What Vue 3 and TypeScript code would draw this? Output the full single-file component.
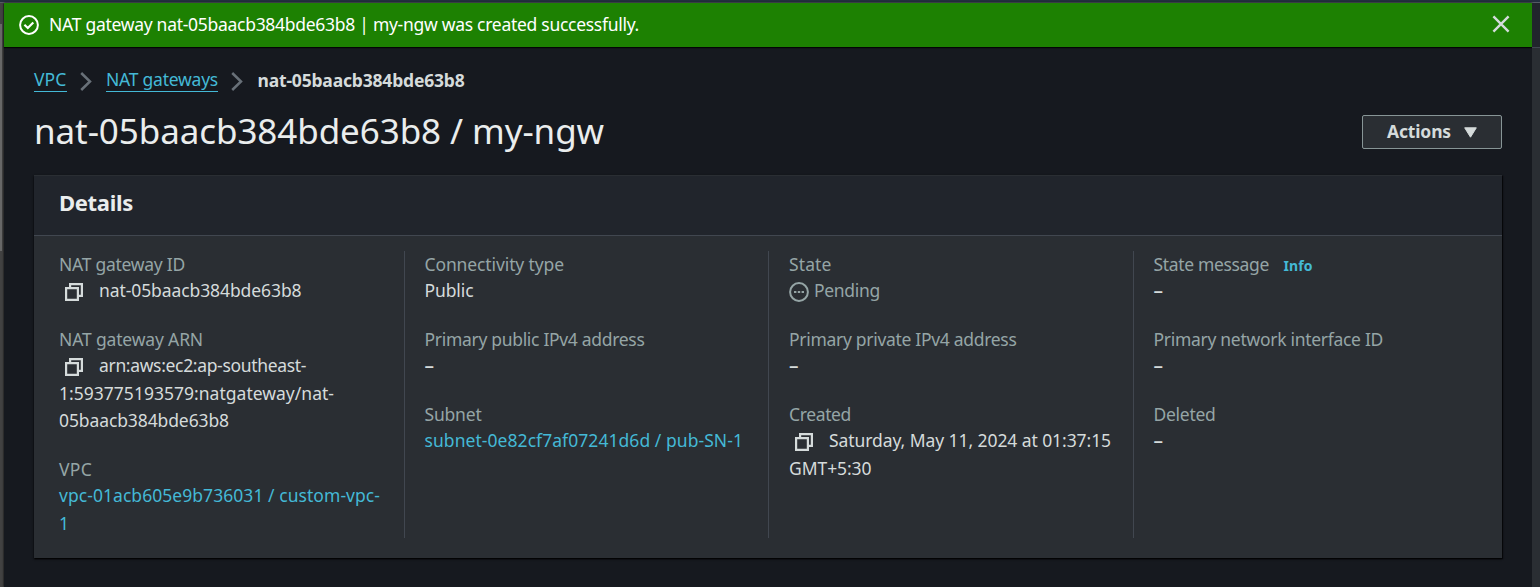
<script setup lang="ts">
import type { Directive } from 'vue'

interface Line {
  text: string
  width: number
}
interface Field {
  label: Line
  lines: Line[]
  kind?: 'copy' | 'link' | 'pending'
  info?: boolean
}

/* Tracks a line of text so that it takes the given width in pixels. */
const vFit: Directive<HTMLElement, number> = {
  mounted(el, { value }) {
    const count = (el.textContent ?? '').length
    const natural = el.getBoundingClientRect().width
    el.style.letterSpacing = `${(value - natural) / count}px`
  },
}

const none: Line[] = [{ text: '–', width: 10 }]

const columns: Field[][] = [
  [
    { label: { text: 'NAT gateway ID', width: 126 }, kind: 'copy', lines: [{ text: 'nat-05baacb384bde63b8', width: 202.5 }] },
    {
      label: { text: 'NAT gateway ARN', width: 144 },
      kind: 'copy',
      lines: [
        { text: 'arn:aws:ec2:ap-southeast-', width: 207 },
        { text: '1:593775193579:natgateway/nat-', width: 275 },
        { text: '05baacb384bde63b8', width: 170 },
      ],
    },
    {
      label: { text: 'VPC', width: 33 },
      kind: 'link',
      lines: [
        { text: 'vpc-01acb605e9b736031 / custom-vpc-', width: 321 },
        { text: '1', width: 10 },
      ],
    },
  ],
  [
    { label: { text: 'Connectivity type', width: 139.5 }, lines: [{ text: 'Public', width: 49 }] },
    { label: { text: 'Primary public IPv4 address', width: 220 }, lines: none },
    { label: { text: 'Subnet', width: 57 }, kind: 'link', lines: [{ text: 'subnet-0e82cf7af07241d6d / pub-SN-1', width: 318.5 }] },
  ],
  [
    { label: { text: 'State', width: 42.5 }, kind: 'pending', lines: [{ text: 'Pending', width: 66 }] },
    { label: { text: 'Primary private IPv4 address', width: 227.5 }, lines: none },
    {
      label: { text: 'Created', width: 62 },
      kind: 'copy',
      lines: [
        { text: 'Saturday, May 11, 2024 at 01:37:15', width: 282 },
        { text: 'GMT+5:30', width: 82.5 },
      ],
    },
  ],
  [
    { label: { text: 'State message', width: 115.5 }, info: true, lines: none },
    { label: { text: 'Primary network interface ID', width: 229.5 }, lines: none },
    { label: { text: 'Deleted', width: 62 }, lines: none },
  ],
]
</script>

<template>
  <div class="screen">
    <div class="topline"></div>
    <div class="frame">
      <div class="scrollbar"><div class="thumb"></div></div>
      <main class="content">
        <div class="flash">
          <svg class="flash-icon" width="20" height="20" viewBox="0 0 20 20" fill="none" stroke="#fff" stroke-width="2">
            <circle cx="10" cy="10" r="8.9" />
            <path d="M5.4 9.8 8.8 13l5.5-5.6" stroke-width="2.2" />
          </svg>
          <span class="flash-text" v-fit="590">NAT gateway nat-05baacb384bde63b8 | my-ngw was created successfully.</span>
          <svg class="close" width="18" height="18" viewBox="0 0 18 18" stroke="#d5dbdb" stroke-width="2.4">
            <path d="M1.4 1.4 16.6 16.6M16.6 1.4 1.4 16.6" />
          </svg>
        </div>

        <div class="page">
          <nav class="crumbs">
            <a class="crumb"><span v-fit="32.5">VPC</span></a>
            <svg class="chevron" width="12" height="19" viewBox="0 0 12 19" fill="none" stroke="#687078" stroke-width="2.5">
              <path d="M1.2 1 10 9.5 1.2 18" />
            </svg>
            <a class="crumb second"><span v-fit="112">NAT gateways</span></a>
            <svg class="chevron" width="12" height="19" viewBox="0 0 12 19" fill="none" stroke="#687078" stroke-width="2.5">
              <path d="M1.2 1 10 9.5 1.2 18" />
            </svg>
            <b class="here" v-fit="207">nat-05baacb384bde63b8</b>
          </nav>

          <header class="heading">
            <h1><span v-fit="570">nat-05baacb384bde63b8 / my-ngw</span></h1>
            <button class="actions">
              <span v-fit="64">Actions</span>
              <svg width="13" height="11" viewBox="0 0 13 11" fill="#d5dbdb" stroke="#d5dbdb" stroke-linejoin="round">
                <path d="M.7.8h11.6L6.5 10.2Z" />
              </svg>
            </button>
          </header>

          <section class="card">
            <div class="card-head"><h2><span v-fit="74">Details</span></h2></div>
            <div class="card-body">
              <div v-for="(column, c) in columns" :key="c" class="column">
                <div v-for="field in column" :key="field.label.text" class="field">
                  <div class="label">
                    <span v-fit="field.label.width">{{ field.label.text }}</span>
                    <a v-if="field.info" class="info"><span v-fit="29">Info</span></a>
                  </div>
                  <div class="values">
                    <div v-for="(line, i) in field.lines" :key="i" class="value" :class="field.kind">
                      <svg v-if="field.kind === 'copy' && i === 0" class="copy-icon" width="18" height="18" viewBox="0 0 18 18" fill="none" stroke="#d5dbdb" stroke-width="2.2">
                        <path d="M1.1 5.1h11.8v11.8H1.1Z" />
                        <path d="M5.1 5V1.1h11.8v11.8h-4" />
                      </svg>
                      <svg v-if="field.kind === 'pending'" class="state-icon" width="20" height="20" viewBox="0 0 20 20" fill="none" stroke="#95a5a6" stroke-width="2">
                        <circle cx="10" cy="10" r="8.9" />
                        <path d="M5 10h2.4M8.8 10h2.4M12.6 10H15" />
                      </svg>
                      <span v-fit="line.width" :class="{ dash: line.text === '–' }">{{ line.text }}</span>
                    </div>
                  </div>
                </div>
              </div>
            </div>
          </section>
        </div>
      </main>
      <aside class="side"><div class="side-head"></div></aside>
    </div>
  </div>
</template>

<style>
body {
  background: #16191f;
  overflow: hidden;
}
</style>

<style scoped>
.screen {
  height: 587px;
  display: flex;
  flex-direction: column;
  overflow: hidden;
  box-sizing: border-box;
  color: #d5dbdb;
  background: #16191f;
  font: 17.5px/27.5px 'Noto Sans', sans-serif;
}
.screen span,
.here {
  white-space: nowrap;
}
.topline {
  height: 2px;
  flex: none;
  background: #232f3e;
  border-bottom: 1px solid #545b64;
}
.frame {
  flex: 1;
  display: flex;
}
.scrollbar {
  width: 4px;
  background: #424242;
  padding-top: 21px;
  box-sizing: border-box;
}
.thumb {
  width: 2px;
  height: 227px;
  background: #686868;
}
.content {
  flex: 1;
  box-shadow: 0 0 2px #000;
}
.flash {
  height: 44px;
  display: flex;
  align-items: center;
  box-sizing: border-box;
  padding: 0 22px 0 15px;
  background: #1d8102;
  color: #fff;
  box-shadow: 0 1px 1px #000c;
}
.flash-icon {
  margin-right: 10px;
}
.flash-text {
  line-height: 24px;
  margin-top: -3px;
}
.close {
  margin-left: auto;
  margin-top: -2px;
}
.page {
  padding: 20px 30px 0;
}
.crumbs {
  height: 26px;
  display: flex;
  align-items: center;
}
.crumb {
  color: #44b9d6;
  line-height: 23px;
  height: 22px;
  border-bottom: 1px solid #44b9d6;
}
.crumb span {
  display: block;
  width: max-content;
  position: relative;
  top: -1px;
}
.second {
  margin-left: 0.5px;
}
.chevron {
  margin: 2px 14px 0 13px;
}
.here {
  margin-left: 0.5px;
  line-height: 26px;
  margin-top: -1px;
}
.heading {
  height: 82px;
  display: flex;
  justify-content: space-between;
  align-items: flex-start;
}
h1 {
  margin: 16px 0 0;
  font-size: 35px;
  line-height: 44px;
  font-weight: 400;
  color: #eaeded;
}
.actions {
  width: 140px;
  height: 34px;
  margin: 22px 0 0;
  padding: 0 0 3px;
  display: flex;
  align-items: center;
  justify-content: center;
  gap: 13px;
  border: 1px solid #879596;
  border-radius: 2px;
  background: #2a2e33;
  color: #d5dbdb;
  font: 700 17.5px/28px 'Noto Sans', sans-serif;
}
.actions svg {
  margin-top: 3px;
}
.card {
  height: 383px;
  background: #2a2e33;
  box-shadow: 0 1px 2px #000, 1px 1px 1px #0008;
}
.card-head {
  height: 61px;
  box-sizing: border-box;
  padding: 12px 25px 0;
  background: #21252c;
  border-top: 1px solid #2a2e33;
  border-bottom: 1px solid #414750;
}
h2 {
  margin: 0;
  font-size: 22px;
  line-height: 28px;
  font-weight: 700;
  color: #eaeded;
}
.card-body {
  display: grid;
  grid-template-columns: 345px 364px 365px 344px;
  padding: 15px 25px 20px;
}
.column {
  height: 287px;
  box-sizing: border-box;
}
.column + .column {
  border-left: 1px solid #414750;
  padding-left: 19.5px;
}
.column:nth-child(3) {
  padding-left: 20px;
}
.field {
  margin-bottom: 20px;
  position: relative;
  top: -0.5px;
}
.label {
  height: 27.5px;
  color: #95a5a6;
  display: flex;
  align-items: baseline;
}
.info {
  margin-left: 14.5px;
  color: #44b9d6;
  font-size: 14px;
  font-weight: 700;
}
.values {
  margin: -1px 0 21px;
}
.value {
  height: 27.5px;
  display: flex;
  align-items: center;
}
.link {
  color: #44b9d6;
}
.pending {
  color: #95a5a6;
}
.dash {
  font-size: 19px;
  font-weight: 500;
}
.copy-icon {
  margin: 2px 16px 0 6px;
}
.state-icon {
  margin: 2px 5px 0 0;
}
.side {
  width: 8px;
  background: #2a2e33;
}
.side-head {
  height: 44px;
  background: #21252c;
  border-bottom: 1px solid #414750;
}
</style>
